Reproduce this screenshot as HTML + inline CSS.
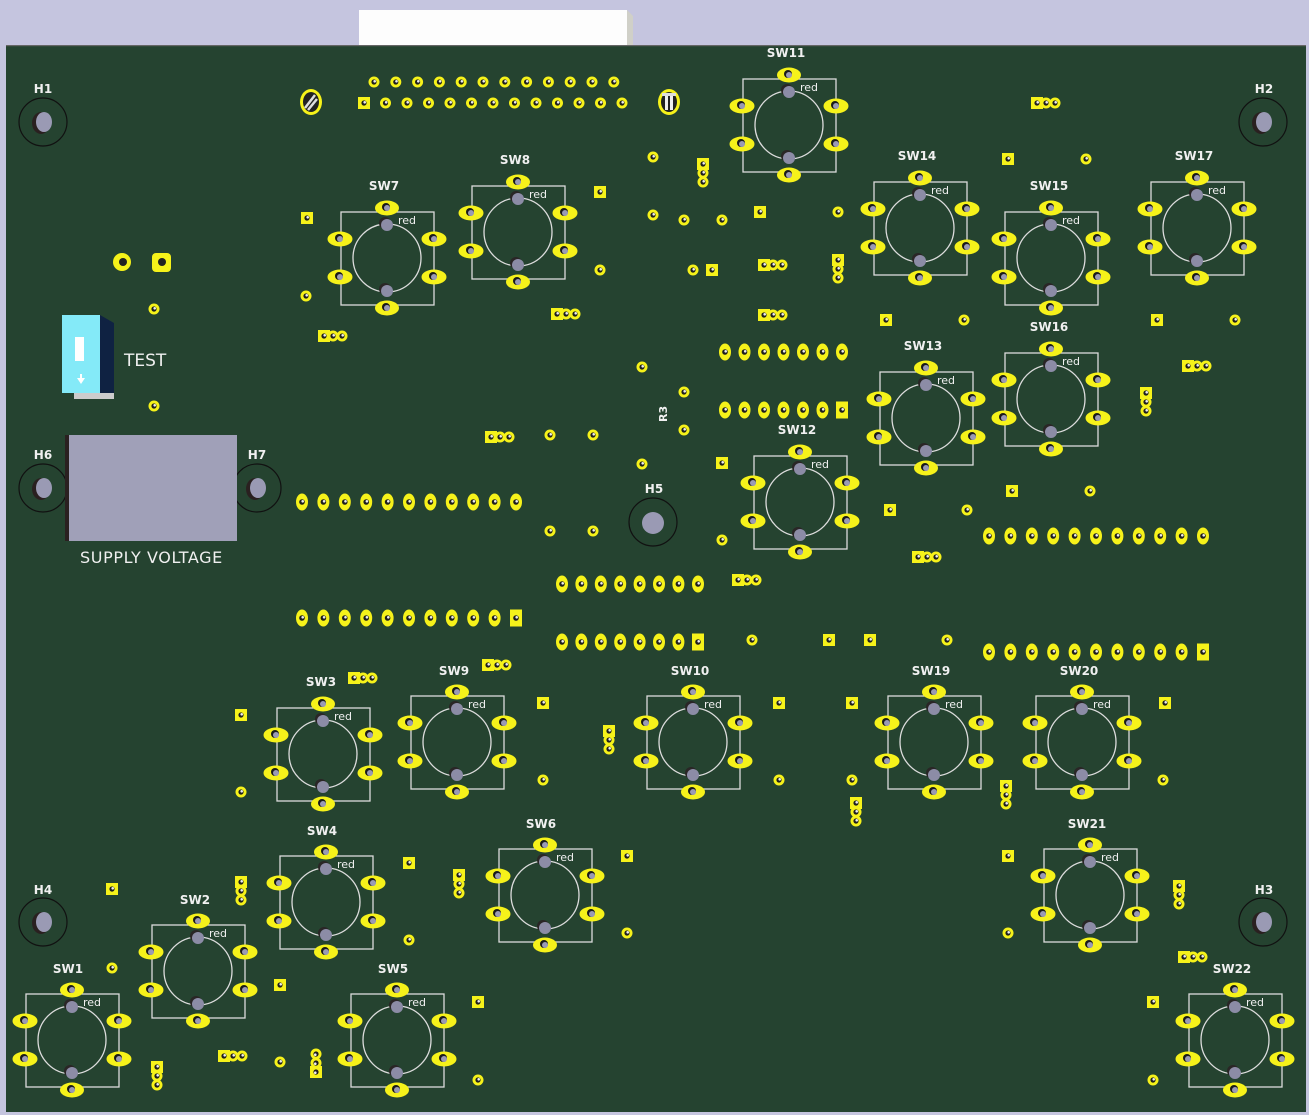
<!DOCTYPE html>
<html><head><meta charset="utf-8"><style>
html,body{margin:0;padding:0;background:#c5c5df;width:1309px;height:1115px;overflow:hidden}
svg{display:block}
text{font-family:"DejaVu Sans","Liberation Sans",sans-serif;fill:#f0f0f0}
.l{font-size:12px;text-anchor:middle;font-weight:bold}
.r{font-size:11px}
</style></head><body>
<svg width="1309" height="1115" viewBox="0 0 1309 1115" xmlns="http://www.w3.org/2000/svg">
<defs>
<g id="hp"><ellipse cx="-1" cy="-1" rx="4" ry="4" fill="#1a1a1a"/><circle cx="0" cy="0" r="3" fill="#9a9ab4"/></g>
<g id="sw">
<rect x="-46" y="-46" width="93" height="93" fill="none" stroke="#dcdcdc" stroke-width="1.3"/>
<circle cx="0" cy="0" r="34" fill="none" stroke="#dcdcdc" stroke-width="1.3"/>
<ellipse cx="0" cy="-50" rx="12" ry="7.5" fill="#f6f21a"/><ellipse cx="0" cy="50" rx="12" ry="7.5" fill="#f6f21a"/>
<ellipse cx="-47" cy="-19" rx="12.5" ry="7.5" fill="#f6f21a"/><ellipse cx="-47" cy="19" rx="12.5" ry="7.5" fill="#f6f21a"/>
<ellipse cx="47" cy="-19" rx="12.5" ry="7.5" fill="#f6f21a"/><ellipse cx="47" cy="19" rx="12.5" ry="7.5" fill="#f6f21a"/>
<use href="#hp" x="0" y="-50"/><use href="#hp" x="0" y="50"/><use href="#hp" x="-47" y="-19"/><use href="#hp" x="-47" y="19"/><use href="#hp" x="47" y="-19"/><use href="#hp" x="47" y="19"/>
<circle cx="-2" cy="-35" r="6" fill="#2a2626"/><circle cx="0" cy="-33" r="6" fill="#8c8ca6"/>
<circle cx="-2" cy="31" r="6" fill="#2a2626"/><circle cx="0" cy="33" r="6" fill="#8c8ca6"/>
</g>
<g id="p"><circle r="5.5" fill="#f6f21a"/><circle r="2.6" fill="#1e1e1e"/><circle cx="0.7" cy="-0.7" r="1.3" fill="#eee"/></g>
<g id="s"><rect x="-6" y="-6" width="12" height="12" fill="#f6f21a"/><circle r="2.6" fill="#1e1e1e"/><circle cx="0.7" cy="-0.7" r="1.3" fill="#eee"/></g>
<g id="o"><ellipse rx="6" ry="8.5" fill="#f6f21a"/><circle r="2.8" fill="#1e1e1e"/><circle cx="0.7" cy="-0.7" r="1.3" fill="#eee"/></g>
<g id="oq"><rect x="-6" y="-8.5" width="12" height="17" fill="#f6f21a"/><circle r="2.8" fill="#1e1e1e"/><circle cx="0.7" cy="-0.7" r="1.3" fill="#eee"/></g>
<g id="th"><use href="#s" x="0"/><use href="#p" x="9"/><use href="#p" x="18"/></g>
<g id="tv"><use href="#s" y="0"/><use href="#p" y="9"/><use href="#p" y="18"/></g>
<g id="hole"><circle r="24" fill="none" stroke="#111" stroke-width="1.2"/><ellipse cx="-2" cy="1" rx="9" ry="11" fill="#2a2020"/><ellipse cx="1" cy="0" rx="8" ry="10" fill="#9a9ab4"/></g>
<g id="row11"><use href="#o" x="0"/><use href="#o" x="21.4"/><use href="#o" x="42.8"/><use href="#o" x="64.2"/><use href="#o" x="85.6"/><use href="#o" x="107"/><use href="#o" x="128.4"/><use href="#o" x="149.8"/><use href="#o" x="171.2"/><use href="#o" x="192.6"/><use href="#o" x="214"/></g>
<g id="row10"><use href="#o" x="0"/><use href="#o" x="21.4"/><use href="#o" x="42.8"/><use href="#o" x="64.2"/><use href="#o" x="85.6"/><use href="#o" x="107"/><use href="#o" x="128.4"/><use href="#o" x="149.8"/><use href="#o" x="171.2"/><use href="#o" x="192.6"/><use href="#oq" x="214"/></g>
</defs>
<rect x="359" y="10" width="268" height="36" fill="#fdfdfd"/><polygon points="627,10 633,16 633,46 627,46" fill="#d0d0c8"/>
<rect x="6" y="45" width="1300" height="1067" fill="#254330"/>
<rect x="6" y="45" width="1300" height="1.2" fill="#666"/>
<use href="#hole" x="43" y="122"/><use href="#hole" x="1263" y="122"/><use href="#hole" x="43" y="922"/><use href="#hole" x="1263" y="922"/><use href="#hole" x="43" y="488"/><use href="#hole" x="257" y="488"/>
<circle cx="653" cy="522" r="24" fill="none" stroke="#111" stroke-width="1.2"/><circle cx="653" cy="523" r="11" fill="#9a9ab4"/>
<g class="l"><text x="43" y="93">H1</text><text x="1264" y="93">H2</text><text x="43" y="459">H6</text><text x="257" y="459">H7</text><text x="43" y="894">H4</text><text x="1264" y="894">H3</text><text x="654" y="493">H5</text></g>
<g>
<use href="#p" x="374" y="82"/><use href="#p" x="395.8" y="82"/><use href="#p" x="417.6" y="82"/><use href="#p" x="439.4" y="82"/><use href="#p" x="461.2" y="82"/><use href="#p" x="483" y="82"/><use href="#p" x="504.8" y="82"/><use href="#p" x="526.6" y="82"/><use href="#p" x="548.4" y="82"/><use href="#p" x="570.2" y="82"/><use href="#p" x="592" y="82"/><use href="#p" x="613.8" y="82"/>
<use href="#s" x="364" y="103"/><use href="#p" x="385.5" y="103"/><use href="#p" x="407" y="103"/><use href="#p" x="428.5" y="103"/><use href="#p" x="450" y="103"/><use href="#p" x="471.5" y="103"/><use href="#p" x="493" y="103"/><use href="#p" x="514.5" y="103"/><use href="#p" x="536" y="103"/><use href="#p" x="557.5" y="103"/><use href="#p" x="579" y="103"/><use href="#p" x="600.5" y="103"/><use href="#p" x="622" y="103"/>
</g>
<ellipse cx="311" cy="102" rx="11" ry="13" fill="#f6f21a"/><ellipse cx="311" cy="102" rx="8" ry="10" fill="#222"/><path d="M305 108 L315 95 M308 110 L317 99" stroke="#ddd" stroke-width="2.5"/>
<ellipse cx="669" cy="102" rx="11" ry="13" fill="#f6f21a"/><ellipse cx="669" cy="102" rx="8" ry="10" fill="#222"/><rect x="665" y="96" width="3" height="14" fill="#eee"/><rect x="670" y="96" width="3" height="14" fill="#eee"/><rect x="662" y="93" width="14" height="3" fill="#ddd"/>
<rect x="62" y="315" width="38" height="78" fill="#84eaf8"/><polygon points="100,315 114,323 114,395 100,393" fill="#0f2242"/><rect x="74" y="393" width="40" height="6" fill="#ccc"/>
<rect x="75" y="337" width="9" height="24" fill="#fff"/><path d="M77 378 L85 378 L81 384 Z M80 374 h2 v5 h-2z" fill="#fff"/>
<text x="124" y="366" style="font-size:17px">TEST</text>
<rect x="65" y="435" width="4" height="106" fill="#2a2020"/><rect x="69" y="435" width="168" height="106" fill="#a0a0b8"/>
<text x="80" y="563" style="font-size:16px;letter-spacing:0.6px">SUPPLY VOLTAGE</text>
<circle cx="122" cy="262" r="9" fill="#f6f21a"/><circle cx="123" cy="262" r="4" fill="#222"/><rect x="152" y="253" width="19" height="19" rx="4" fill="#f6f21a"/><circle cx="162" cy="262" r="4" fill="#222"/>
<use href="#row11" x="302" y="502"/><use href="#row10" x="302" y="618"/>
<use href="#row11" x="989" y="536"/><use href="#row10" x="989" y="652"/>
<g><use href="#o" x="562" y="584"/><use href="#o" x="581.4" y="584"/><use href="#o" x="600.8" y="584"/><use href="#o" x="620.2" y="584"/><use href="#o" x="639.6" y="584"/><use href="#o" x="659" y="584"/><use href="#o" x="678.4" y="584"/><use href="#o" x="698" y="584"/>
<use href="#o" x="562" y="642"/><use href="#o" x="581.4" y="642"/><use href="#o" x="600.8" y="642"/><use href="#o" x="620.2" y="642"/><use href="#o" x="639.6" y="642"/><use href="#o" x="659" y="642"/><use href="#o" x="678.4" y="642"/><use href="#oq" x="698" y="642"/></g>
<g><use href="#o" x="725" y="352"/><use href="#o" x="744.5" y="352"/><use href="#o" x="764" y="352"/><use href="#o" x="783.5" y="352"/><use href="#o" x="803" y="352"/><use href="#o" x="822.5" y="352"/><use href="#o" x="842" y="352"/>
<use href="#o" x="725" y="410"/><use href="#o" x="744.5" y="410"/><use href="#o" x="764" y="410"/><use href="#o" x="783.5" y="410"/><use href="#o" x="803" y="410"/><use href="#o" x="822.5" y="410"/><use href="#oq" x="842" y="410"/></g>
<text x="667" y="422" style="font-size:11px;font-weight:bold" transform="rotate(-90 667 422)" fill="#f0f0f0">R3</text>
<g>
<use href="#p" x="653" y="157"/><use href="#p" x="653" y="215"/><use href="#p" x="684" y="220"/><use href="#p" x="722" y="220"/><use href="#p" x="838" y="212"/><use href="#p" x="1086" y="159"/><use href="#p" x="964" y="320"/><use href="#p" x="1235" y="320"/><use href="#p" x="693" y="270"/><use href="#p" x="600" y="270"/><use href="#p" x="306" y="296"/><use href="#p" x="154" y="309"/><use href="#p" x="154" y="406"/><use href="#p" x="642" y="367"/><use href="#p" x="684" y="392"/><use href="#p" x="684" y="430"/><use href="#p" x="642" y="464"/><use href="#p" x="550" y="435"/><use href="#p" x="593" y="435"/><use href="#p" x="550" y="531"/><use href="#p" x="593" y="531"/><use href="#p" x="722" y="540"/><use href="#p" x="967" y="510"/><use href="#p" x="1090" y="491"/><use href="#p" x="752" y="640"/><use href="#p" x="947" y="640"/><use href="#p" x="543" y="780"/><use href="#p" x="779" y="780"/><use href="#p" x="852" y="780"/><use href="#p" x="1163" y="780"/><use href="#p" x="241" y="792"/><use href="#p" x="409" y="940"/><use href="#p" x="627" y="933"/><use href="#p" x="1008" y="933"/><use href="#p" x="112" y="968"/><use href="#p" x="280" y="1062"/><use href="#p" x="478" y="1080"/><use href="#p" x="1153" y="1080"/>
<use href="#s" x="307" y="218"/><use href="#s" x="600" y="192"/><use href="#s" x="760" y="212"/><use href="#s" x="1008" y="159"/><use href="#s" x="886" y="320"/><use href="#s" x="1157" y="320"/><use href="#s" x="712" y="270"/><use href="#s" x="722" y="463"/><use href="#s" x="890" y="510"/><use href="#s" x="1012" y="491"/><use href="#s" x="829" y="640"/><use href="#s" x="870" y="640"/><use href="#s" x="241" y="715"/><use href="#s" x="543" y="703"/><use href="#s" x="779" y="703"/><use href="#s" x="852" y="703"/><use href="#s" x="1165" y="703"/><use href="#s" x="409" y="863"/><use href="#s" x="627" y="856"/><use href="#s" x="1008" y="856"/><use href="#s" x="112" y="889"/><use href="#s" x="280" y="985"/><use href="#s" x="478" y="1002"/><use href="#s" x="1153" y="1002"/>
<use href="#th" x="324" y="336"/><use href="#th" x="557" y="314"/><use href="#th" x="764" y="265"/><use href="#th" x="764" y="315"/><use href="#th" x="491" y="437"/><use href="#th" x="738" y="580"/><use href="#th" x="918" y="557"/><use href="#th" x="354" y="678"/><use href="#th" x="488" y="665"/><use href="#th" x="1188" y="366"/><use href="#th" x="1184" y="957"/><use href="#th" x="224" y="1056"/><use href="#th" x="1037" y="103"/>
<use href="#tv" x="703" y="164"/><use href="#tv" x="838" y="260"/><use href="#tv" x="1146" y="393"/><use href="#tv" x="609" y="731"/><use href="#tv" x="856" y="803"/><use href="#tv" x="1006" y="786"/><use href="#tv" x="241" y="882"/><use href="#tv" x="459" y="875"/><use href="#tv" x="1179" y="886"/><use href="#tv" x="157" y="1067"/><use href="#tv" x="316" y="1090" transform="rotate(180 316 1081)"/>
</g>
<use href="#sw" x="789" y="125"/><use href="#sw" x="518" y="232"/><use href="#sw" x="387" y="258"/><use href="#sw" x="920" y="228"/><use href="#sw" x="1051" y="258"/><use href="#sw" x="1197" y="228"/><use href="#sw" x="1051" y="399"/><use href="#sw" x="926" y="418"/><use href="#sw" x="800" y="502"/><use href="#sw" x="323" y="754"/><use href="#sw" x="457" y="742"/><use href="#sw" x="693" y="742"/><use href="#sw" x="934" y="742"/><use href="#sw" x="1082" y="742"/><use href="#sw" x="326" y="902"/><use href="#sw" x="545" y="895"/><use href="#sw" x="1090" y="895"/><use href="#sw" x="198" y="971"/><use href="#sw" x="72" y="1040"/><use href="#sw" x="397" y="1040"/><use href="#sw" x="1235" y="1040"/>
<g class="r">
<text x="800" y="91">red</text><text x="529" y="198">red</text><text x="398" y="224">red</text><text x="931" y="194">red</text><text x="1062" y="224">red</text><text x="1208" y="194">red</text><text x="1062" y="365">red</text><text x="937" y="384">red</text><text x="811" y="468">red</text><text x="334" y="720">red</text><text x="468" y="708">red</text><text x="704" y="708">red</text><text x="945" y="708">red</text><text x="1093" y="708">red</text><text x="337" y="868">red</text><text x="556" y="861">red</text><text x="1101" y="861">red</text><text x="209" y="937">red</text><text x="83" y="1006">red</text><text x="408" y="1006">red</text><text x="1246" y="1006">red</text>
</g>
<g class="l">
<text x="786" y="57">SW11</text><text x="515" y="164">SW8</text><text x="384" y="190">SW7</text><text x="917" y="160">SW14</text><text x="1049" y="190">SW15</text><text x="1194" y="160">SW17</text><text x="1049" y="331">SW16</text><text x="923" y="350">SW13</text><text x="797" y="434">SW12</text><text x="321" y="686">SW3</text><text x="454" y="675">SW9</text><text x="690" y="675">SW10</text><text x="931" y="675">SW19</text><text x="1079" y="675">SW20</text><text x="322" y="835">SW4</text><text x="541" y="828">SW6</text><text x="1087" y="828">SW21</text><text x="195" y="904">SW2</text><text x="68" y="973">SW1</text><text x="393" y="973">SW5</text><text x="1232" y="973">SW22</text>
</g>
</svg>
</body></html>
